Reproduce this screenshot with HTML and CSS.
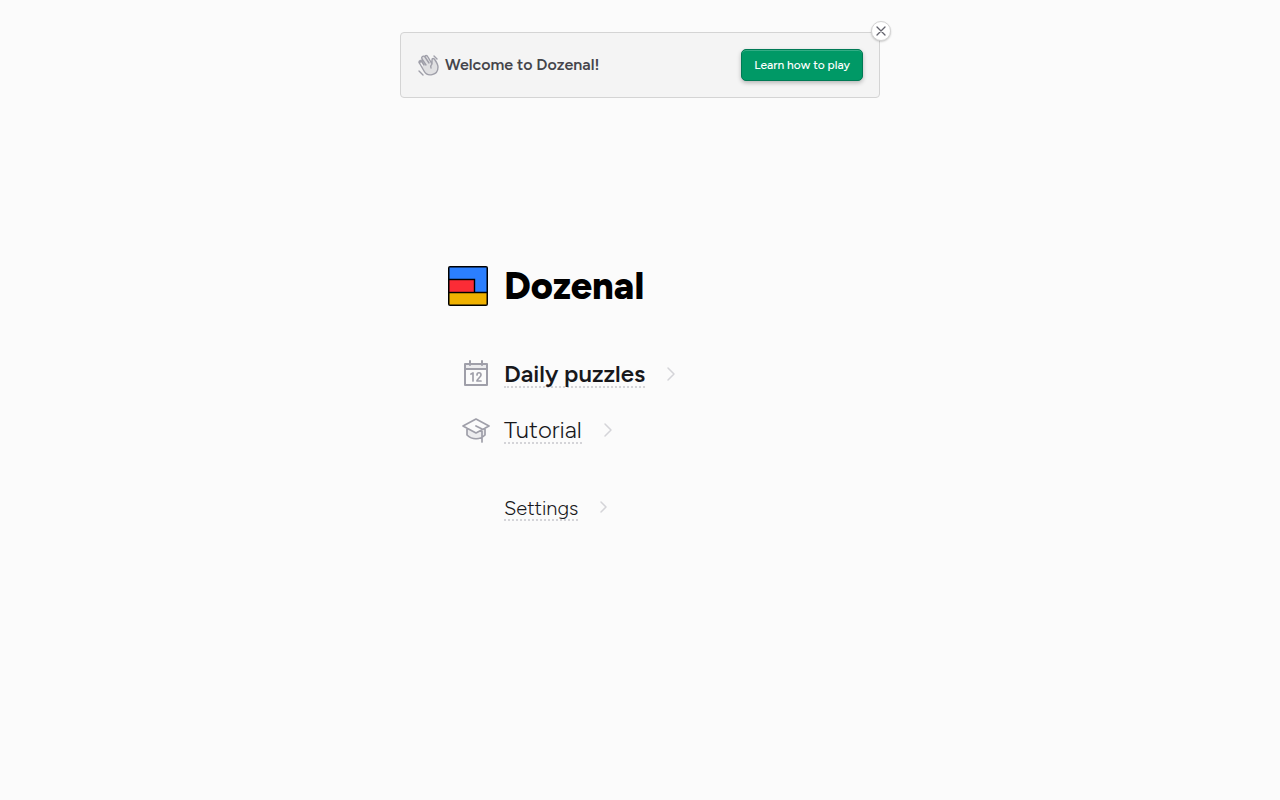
FILE: index.html
```html
<!DOCTYPE html>
<html lang="en">
<head>
    <meta charset="UTF-8">
    <meta name="viewport" content="width=device-width, initial-scale=1">
    <title>Dozenal</title>
    <link rel="stylesheet" href="styles.css">
</head>
<body>
    <aside class="banner">
        <svg class="wave" viewBox="0 0 24 24" aria-hidden="true">
            <path class="tone" d="M7 13L3 8c-1-2 1-3 2-2V4c1-2 2-1 3 0 0-2 2-2 3 0l4 6c0-3-1-5 1-5 2 0 5 5 5 9 0 10-11 10-14 4l-3-5z"/>
            <path d="M9 12L5 6c-1-2 1-4 3-2l4 6M8 4c0-2 2-2 3 0l4 7c-1 1-2 2-1 4M15 11V7c0-2 2-2 3 0 2 3 3 5 3 7 0 9-11 10-14 4l-4-7c-1-2 1-3 2-2l2 3M5 8C2 7 1 9 3 11M17 3l3 3M2 18l4 4"/>
        </svg>
        <p class="banner-text">Welcome to Dozenal!</p>
        <button type="button" class="learn">Learn how to play</button>
        <button type="button" class="close" aria-label="Close">
            <svg viewBox="0 0 12 12" aria-hidden="true"><path d="M2 2l8 8M10 2l-8 8"/></svg>
        </button>
    </aside>

    <main class="home">
        <header class="brand">
            <svg class="logo" viewBox="0 0 40 40" aria-hidden="true">
                <rect width="40" height="40" rx="2"/>
                <path fill="#2b7fff" d="M1.5 1.5h37v24.3H27.2V12.8H1.5z"/>
                <path fill="#fb2c36" d="M1.5 14.2h24.3v11.6H1.5z"/>
                <path fill="#efb100" d="M1.5 27.2h37v11.3h-37z"/>
            </svg>
            <h1>Dozenal</h1>
        </header>

        <nav class="menu">
            <a class="item daily" href="#daily">
                <svg class="icon" viewBox="0 0 28 28" aria-hidden="true">
                    <path class="tone-light" d="M3 4h22v5H3z"/>
                    <path d="M3 4h22v21H3zM3 9h22M8 1v4M20 1v4"/>
                    <path class="digits" d="M9 14l2-1v8M15 15c0-3 4-3 4 0 0 2-4 4-4 6h4"/>
                </svg>
                <span class="label">Daily puzzles</span>
                <svg class="arrow" viewBox="0 0 16 16" aria-hidden="true"><path d="M5 2l6 6-6 6"/></svg>
            </a>
            <a class="item" href="#tutorial">
                <svg class="icon cap" viewBox="0 0 28 28" aria-hidden="true">
                    <path class="tone-light" d="M5 12v7c5 6 13 6 18 0v-7l-9 5z"/>
                    <path d="M1 10l13-7 13 7-13 7zM5 12v7c5 5 13 5 18 0v-7M14 10l6 3v13"/>
                </svg>
                <span class="label">Tutorial</span>
                <svg class="arrow" viewBox="0 0 16 16" aria-hidden="true"><path d="M5 2l6 6-6 6"/></svg>
            </a>
            <a class="item settings" href="#settings">
                <span class="label">Settings</span>
                <svg class="arrow" viewBox="0 0 16 16" aria-hidden="true"><path d="M5 2l5 5-5 5"/></svg>
            </a>
        </nav>
    </main>
</body>
</html>
```

FILE: styles.css
```css
* {
    box-sizing: border-box;
}
body {
    min-height: 100vh;
    margin: 0;
    padding: 32px 16px;
    background-color: #fbfbfb;
    color: #18181b;
    font-family: Figtree, Lato, "Liberation Sans", sans-serif;
}
h1, p {
    margin: 0;
}
svg {
    flex: none;
    fill: none;
    stroke-linecap: round;
    stroke-linejoin: round;
}

.banner {
    position: relative;
    display: flex;
    align-items: center;
    gap: 4px;
    max-width: 480px;
    margin: 0 auto;
    padding: 16px;
    border: 1px solid #d4d4d4;
    border-radius: 4px;
    background-color: #f4f4f4;
}
.wave {
    width: 24px;
    height: 24px;
    stroke: #9f9fa9;
    stroke-width: 1.4;
}
.tone {
    fill: #e0e0e2;
    stroke: none;
}
.tone-light {
    fill: #ececee;
    stroke: none;
}
.banner-text {
    flex: 1;
    color: #45454b;
    font-size: 16px;
    font-weight: 600;
    line-height: 24px;
}
.learn {
    height: 32px;
    padding: 0 12px;
    border: 1px solid #007a55;
    border-radius: 5px;
    background-color: #009966;
    box-shadow: inset 0 1px 0 #33ad85, 0 2px 4px rgba(0,0,0,0.25);
    color: white;
    font-family: inherit;
    font-size: 12px;
    font-weight: 500;
    cursor: pointer;
}
.close {
    position: absolute;
    top: -12px;
    right: -12px;
    display: flex;
    align-items: center;
    justify-content: center;
    width: 20px;
    height: 20px;
    padding: 0;
    border: 1px solid #d4d4d4;
    border-radius: 50%;
    background-color: white;
    box-shadow: 0 1px 2px rgba(0,0,0,0.2);
    cursor: pointer;
}
.close svg {
    width: 12px;
    height: 12px;
    stroke: #62626c;
    stroke-width: 1.3;
}

.home {
    max-width: 384px;
    margin: 168px auto 0;
}
.brand {
    display: flex;
    align-items: center;
    gap: 16px;
}
.logo {
    width: 40px;
    height: 40px;
}
.logo rect {
    fill: black;
}
h1 {
    color: black;
    font-size: 38px;
    font-weight: 800;
    line-height: 40px;
}

.menu {
    display: flex;
    flex-direction: column;
    align-items: flex-start;
    gap: 24px;
    margin-top: 52px;
    padding-left: 14px;
}
.item {
    display: flex;
    align-items: center;
    gap: 14px;
    height: 32px;
    color: inherit;
    font-size: 24px;
    font-weight: 300;
    text-decoration: none;
}
.label {
    padding-top: 2px;
    border-bottom: 2px dotted #d4d4d8;
    line-height: 24px;
}
.daily .label {
    font-weight: 600;
}
.icon {
    width: 28px;
    height: 28px;
    stroke: #9f9fa9;
    stroke-width: 2;
}
.cap, .digits {
    stroke-width: 1.7;
}
.arrow {
    width: 16px;
    height: 16px;
    margin-left: 4px;
    stroke: #d4d4d8;
    stroke-width: 1.5;
}
.settings {
    margin-top: 22px;
    padding-left: 42px;
    font-size: 20px;
}
.settings .label {
    line-height: 22px;
}
@media (max-width: 600px) {
    .home {
        margin-top: 96px;
    }
}
```
